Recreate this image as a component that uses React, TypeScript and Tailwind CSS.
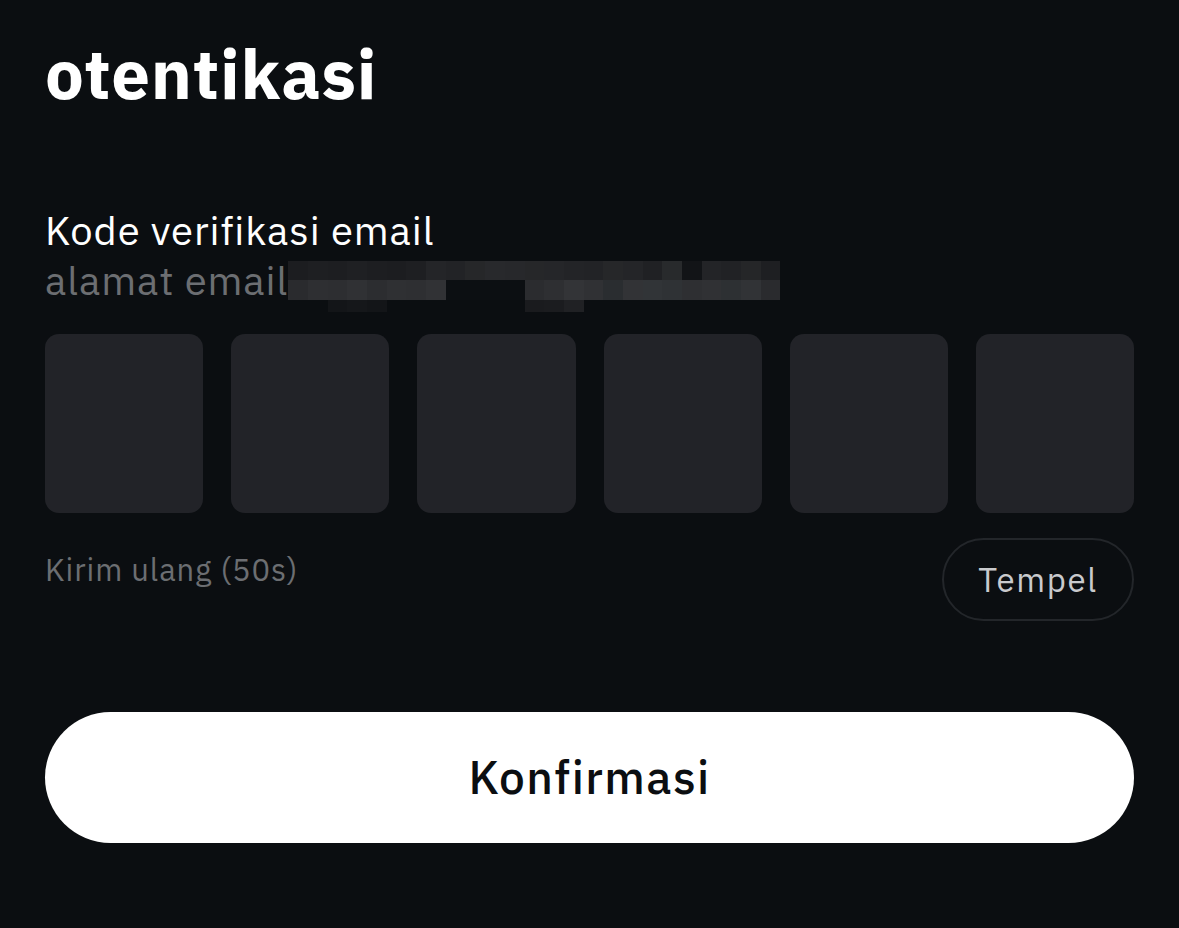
import React from 'react';

const row1 = [
  'bg-[#1c1d20]', 'bg-[#1e1f22]', 'bg-[#1d1e21]', 'bg-[#1f2023]', 'bg-[#1d1e21]', 'bg-[#1c1d20]',
  'bg-[#1e1f22]', 'bg-[#242528]', 'bg-[#222326]', 'bg-[#262729]', 'bg-[#28292c]', 'bg-[#27282b]',
  'bg-[#262729]', 'bg-[#252629]', 'bg-[#232427]', 'bg-[#222326]', 'bg-[#262729]', 'bg-[#242528]',
  'bg-[#202124]', 'bg-[#282a2c]', 'bg-[#121417]', 'bg-[#232427]', 'bg-[#212225]', 'bg-[#252628]',
  'bg-[#1e1f22]',
];
const row2 = [
  'bg-[#2a2b2e]', 'bg-[#2e2f32]', 'bg-[#2d2e31]', 'bg-[#303134]', 'bg-[#2c2d30]', 'bg-[#2f3033]',
  'bg-[#2e2f32]', 'bg-[#313235]', 'bg-[#0c0f12]', 'bg-[#0c0f12]', 'bg-[#0c0f12]', 'bg-[#0c0f12]',
  'bg-[#2b2c2f]', 'bg-[#2e2f32]', 'bg-[#333437]', 'bg-[#303134]', 'bg-[#2a2d30]', 'bg-[#323336]',
  'bg-[#313437]', 'bg-[#2f3235]', 'bg-[#2e2f32]', 'bg-[#303134]', 'bg-[#2d3033]', 'bg-[#313336]',
  'bg-[#2a2b2e]',
];
const row3 = [
  'bg-transparent', 'bg-transparent', 'bg-[#131518]', 'bg-[#15171a]', 'bg-[#131518]', 'bg-transparent',
  'bg-transparent', 'bg-transparent', 'bg-transparent', 'bg-transparent', 'bg-transparent', 'bg-transparent',
  'bg-[#1a1b1e]', 'bg-[#1b1c1f]', 'bg-[#202124]', 'bg-transparent',
];

const Mosaic: React.FC = () => (
  <div className="flex flex-col mt-[6px]">
    <div className="flex">
      {row1.map((c, i) => (
        <div key={i} className={`w-[19.7px] h-[19px] ${c}`} />
      ))}
    </div>
    <div className="flex">
      {row2.map((c, i) => (
        <div key={i} className={`w-[19.7px] h-[20px] ${c}`} />
      ))}
    </div>
    <div className="flex">
      {row3.map((c, i) => (
        <div key={i} className={`w-[19.7px] h-[12px] ${c}`} />
      ))}
    </div>
  </div>
);

export default function App() {
  return (
    <div
      className="min-h-screen w-full bg-[#0b0e11] px-[45px] pt-[28px]"
      style={{ fontFamily: '"IBM Plex Sans", Roboto, "Noto Sans", sans-serif' }}
    >
      {/* Title */}
      <h1 className="text-[69px] leading-[90px] font-bold text-white tracking-[0.8px]">otentikasi</h1>

      {/* Email verification */}
      <div className="mt-[87px]">
        <p className="text-[40px] leading-[50px] text-white tracking-[0.9px]">Kode verifikasi email</p>
        <div className="flex items-start h-[58px]">
          <span className="text-[40px] leading-[50px] text-[#6c6e72] tracking-[0.9px]">alamat email</span>
          <Mosaic />
        </div>
      </div>

      {/* Code inputs */}
      <div className="mt-[21px] grid grid-cols-6 gap-[28px]">
        {[0, 1, 2, 3, 4, 5].map((i) => (
          <div key={i} className="h-[179px] rounded-[14px] bg-[#222328]" />
        ))}
      </div>

      {/* Resend / paste */}
      <div className="mt-[25px] flex items-start justify-between">
        <span className="mt-[12px] text-[31px] leading-[40px] text-[#6c6e72] tracking-[0.9px]">Kirim ulang (50s)</span>
        <button className="h-[83px] w-[192px] rounded-full border-2 border-[#23262a] text-[33px] text-[#c9cacd] tracking-[1.6px]">
          Tempel
        </button>
      </div>

      {/* Confirm */}
      <button className="mt-[91px] h-[131px] w-full rounded-full bg-white text-[46px] font-medium text-[#0b0e11] tracking-[1.4px]">
        Konfirmasi
      </button>
    </div>
  );
}
